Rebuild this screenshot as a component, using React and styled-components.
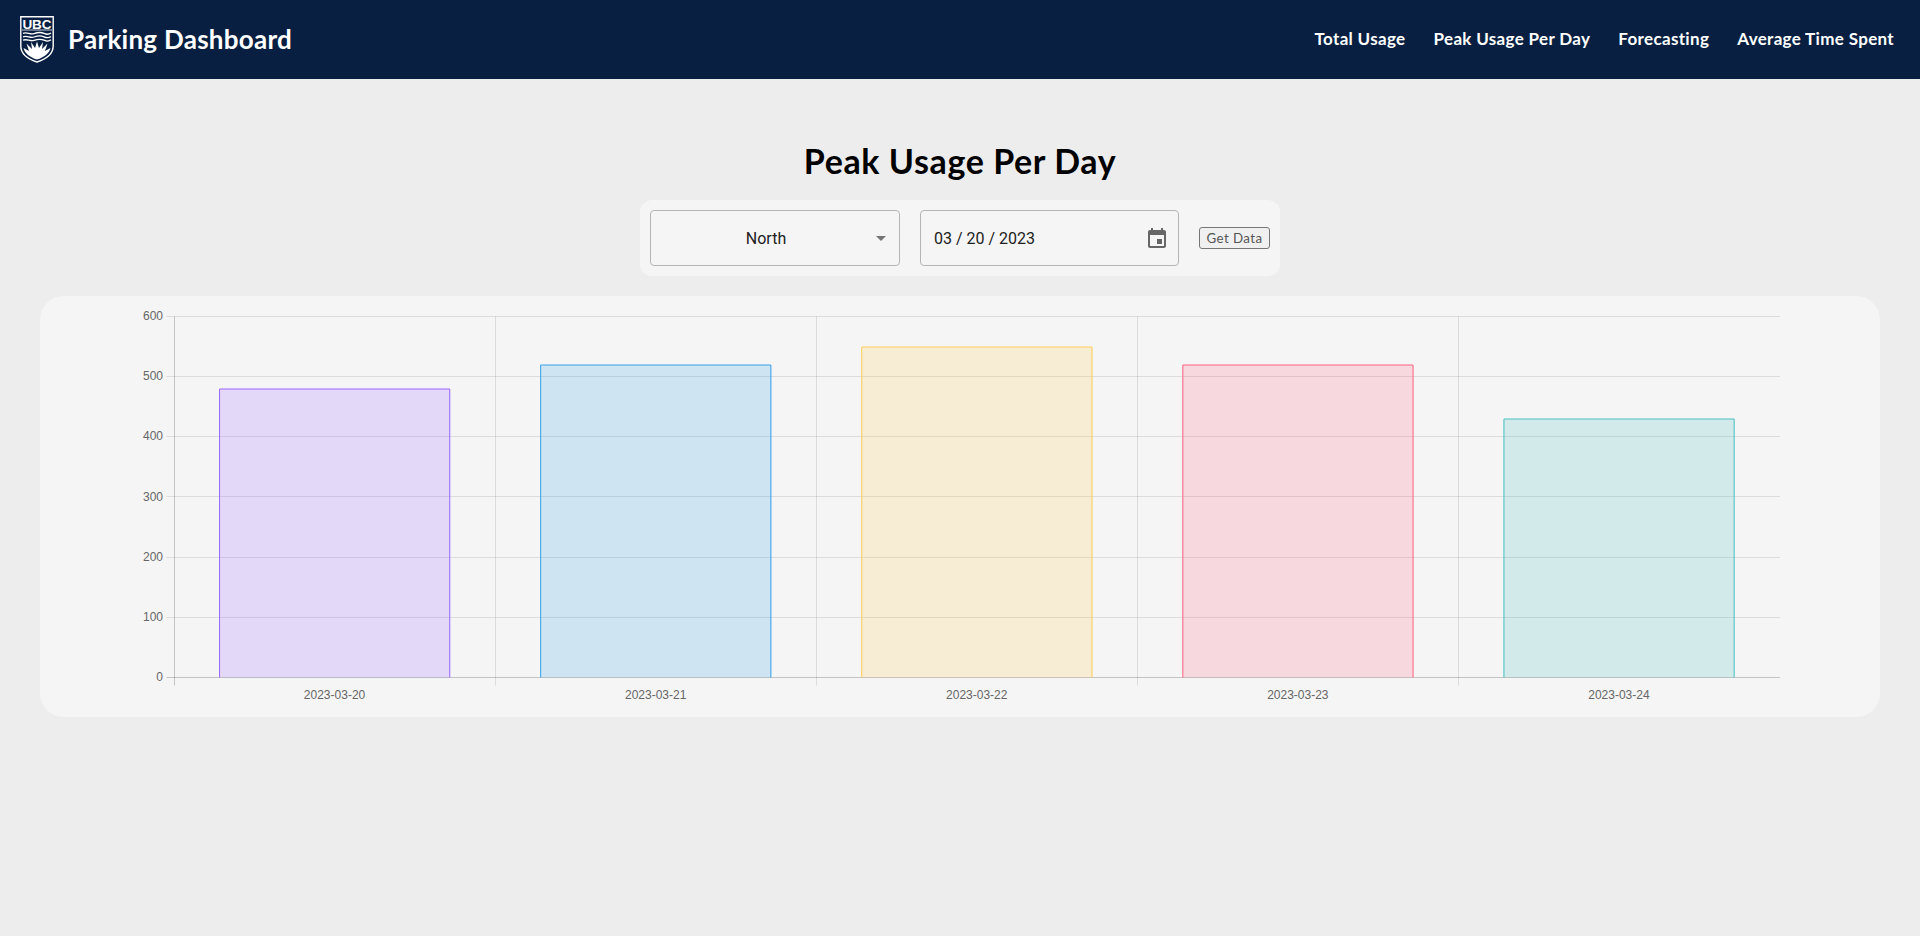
import styled, { createGlobalStyle } from "styled-components";

const GlobalStyle = createGlobalStyle`
  html, body {
    margin: 0;
    padding: 0;
    background: #ededed;
    font-family: "Lato", "Noto Sans", sans-serif;
  }
`;

const Page = styled.div`
  min-height: 936px;
  background: #ededed;
`;

const Header = styled.header`
  height: 79px;
  background: #081f41;
  color: #fff;
  display: flex;
  align-items: center;
  justify-content: space-between;
  padding: 0 26px 0 20px;
`;

const Brand = styled.div`
  display: flex;
  align-items: center;
  gap: 14px;
`;

const BrandName = styled.span`
  font-size: 26px;
  font-weight: 700;
  letter-spacing: 0.27px;
  margin-bottom: 2px;
`;

const Nav = styled.nav`
  display: flex;
  gap: 28px;
  margin-bottom: 2px;
`;

const NavLink = styled.a`
  font-size: 17px;
  font-weight: 700;
  color: #fff;
  letter-spacing: 0.33px;
  white-space: nowrap;
`;

const Main = styled.main`
  padding: 59px 40px 0;
  display: flex;
  flex-direction: column;
  align-items: center;
`;

const Title = styled.h1`
  margin: 0;
  height: 46px;
  line-height: 46px;
  font-size: 34px;
  font-weight: 700;
  letter-spacing: 0.6px;
  color: #000;
`;

const Filters = styled.div`
  margin-top: 16px;
  width: 640px;
  height: 76px;
  box-sizing: border-box;
  padding: 10px;
  background: #f5f5f5;
  border-radius: 12px;
  display: flex;
  align-items: center;
`;

const Field = styled.div`
  position: relative;
  box-sizing: border-box;
  width: ${(p) => p.$width}px;
  height: 56px;
  margin-right: ${(p) => p.$gap}px;
  border: 1px solid #b5b5b5;
  border-radius: 4px;
  display: flex;
  align-items: center;
  font-family: "Roboto", sans-serif;
  font-size: 16px;
  color: #212121;
`;

const SelectValue = styled.span`
  flex: 1;
  text-align: center;
  padding-right: 18px;
`;

const Caret = styled.span`
  position: absolute;
  right: 13px;
  top: 25px;
  width: 0;
  height: 0;
  border-left: 5px solid transparent;
  border-right: 5px solid transparent;
  border-top: 5px solid #757575;
`;

const DateValue = styled.span`
  flex: 1;
  padding-left: 13px;
`;

const CalendarIcon = styled.svg`
  width: 24px;
  height: 24px;
  margin-right: 9px;
  fill: #666;
`;

const GetData = styled.button`
  box-sizing: border-box;
  width: 71px;
  height: 22px;
  padding: 0;
  background: #f0f0f0;
  border: 1px solid #767676;
  border-radius: 3px;
  font-family: "Lato", sans-serif;
  font-size: 13.33px;
  letter-spacing: 0.4px;
  color: #555;
`;

const ChartCard = styled.section`
  margin-top: 20px;
  width: 1840px;
  height: 421px;
  background: #f5f5f5;
  border-radius: 24px;
`;

const ChartSvg = styled.svg`
  display: block;
  width: 1840px;
  height: 421px;
`;

const bars = [
  { label: "2023-03-20", value: 480, color: "153, 102, 255" },
  { label: "2023-03-21", value: 520, color: "54, 162, 235" },
  { label: "2023-03-22", value: 550, color: "255, 206, 86" },
  { label: "2023-03-23", value: 520, color: "255, 99, 132" },
  { label: "2023-03-24", value: 430, color: "75, 192, 192" },
];

const yTicks = [600, 500, 400, 300, 200, 100, 0];

// chart coordinates are relative to the card, which starts at 40,296
const plotLeft = 134.5;
const plotRight = 1740;
const plotTop = 20.5;
const plotBottom = 381.5;
const slot = (plotRight - plotLeft) / 5;
const barWidth = slot * 0.72;
const yFor = (v) => plotBottom - (v / 600) * (plotBottom - plotTop);
const gridY = (v) => Math.round(yFor(v) - 0.6) + 0.5;

const UbcLogo = () => (
  <svg width="34" height="47" viewBox="0 0 34 47">
    <path d="M0.8 0.8H33.2V30C33.2 38 26 43 17 46C8 43 0.8 38 0.8 30Z" fill="#081f41" stroke="#fff" strokeWidth="1.4" />
    <text x="17" y="12.6" textAnchor="middle" fontFamily="Liberation Sans, sans-serif" fontSize="13.5" fontWeight="700" fill="#fff">UBC</text>
    <path d="M2 14H32" stroke="#fff" strokeWidth="0.8" />
    <path d="M3 17.4C7 15.6 10 19 14 17.6S21 16 24 17.4S29 18.6 31 17M3 20.8C7 19 10 22.4 14 21S21 19.4 24 20.8S29 22 31 20.4M3 24.2C7 22.4 10 25.8 14 24.4S21 22.8 24 24.2S29 25.4 31 23.8" fill="none" stroke="#fff" strokeWidth="1.3" />
    <path d="M3.5 32L9 35L6.5 27.5L12 33L11 26L15 32L17 25.5L19 32L23 26L22 33L27.5 27.5L25 35L30.5 32C29.5 37 24 41.5 17 43.5C10 41.5 4.5 37 3.5 32Z" fill="#fff" />
  </svg>
);

const App = () => (
  <Page>
    <GlobalStyle />
    <Header>
      <Brand>
        <UbcLogo />
        <BrandName>Parking Dashboard</BrandName>
      </Brand>
      <Nav>
        <NavLink>Total Usage</NavLink>
        <NavLink>Peak Usage Per Day</NavLink>
        <NavLink>Forecasting</NavLink>
        <NavLink>Average Time Spent</NavLink>
      </Nav>
    </Header>
    <Main>
      <Title>Peak Usage Per Day</Title>
      <Filters>
        <Field $width={250} $gap={20}>
          <SelectValue>North</SelectValue>
          <Caret />
        </Field>
        <Field $width={259} $gap={20}>
          <DateValue>03 / 20 / 2023</DateValue>
          <CalendarIcon viewBox="0 0 24 24">
            <path d="M19 4h-1V2h-2v2H8V2H6v2H5c-1.1 0-2 .9-2 2v14c0 1.1.9 2 2 2h14c1.1 0 2-.9 2-2V6c0-1.1-.9-2-2-2zm0 16H5V9h14v11zM12 13h5v5h-5z" />
          </CalendarIcon>
        </Field>
        <GetData>Get Data</GetData>
      </Filters>
      <ChartCard>
        <ChartSvg viewBox="0 0 1840 421" fontFamily="Liberation Sans, Arial, sans-serif" fontSize="12">
          {yTicks.map((t) => (
            <g key={t}>
              <line
                x1={plotLeft - 8}
                x2={plotRight}
                y1={gridY(t)}
                y2={gridY(t)}
                stroke={t === 0 ? "rgba(0,0,0,0.2)" : "rgba(0,0,0,0.1)"}
              />
              <text x={plotLeft - 11.5} y={yFor(t) + 3.5} textAnchor="end" fill="#666">{t}</text>
            </g>
          ))}
          {[0, 1, 2, 3, 4].map((i) => (
            <line
              key={i}
              x1={Math.floor(plotLeft + slot * i) + 0.5}
              x2={Math.floor(plotLeft + slot * i) + 0.5}
              y1={plotTop}
              y2={plotBottom + 8}
              stroke={i === 0 ? "rgba(0,0,0,0.2)" : "rgba(0,0,0,0.1)"}
            />
          ))}
          {bars.map((b, i) => {
            const x = plotLeft + slot * i + (slot - barWidth) / 2 - 0.4;
            // top edge sits on a whole pixel, so the 1px border spreads over two soft rows
            const y = Math.round(yFor(b.value));
            return (
              <g key={b.label}>
                <rect x={x} y={y} width={barWidth} height={plotBottom - y} fill={`rgba(${b.color}, 0.2)`} />
                <path
                  d={`M${x + 0.5} ${plotBottom}V${y}H${x + barWidth - 0.5}V${plotBottom}`}
                  fill="none"
                  stroke={`rgb(${b.color})`}
                />
                <text x={plotLeft + slot * i + slot / 2 - 0.5} y={plotBottom + 21} textAnchor="middle" fill="#666">{b.label}</text>
              </g>
            );
          })}
        </ChartSvg>
      </ChartCard>
    </Main>
  </Page>
);

export default App;
